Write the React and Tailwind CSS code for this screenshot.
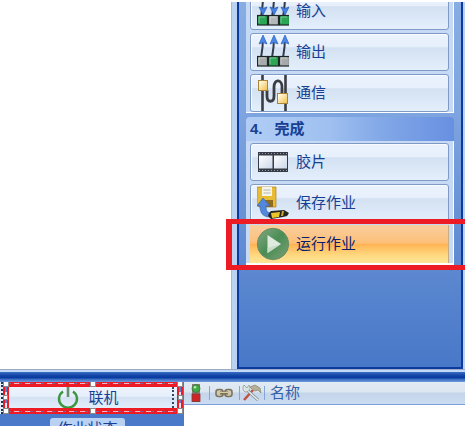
import React from "react";

function SignalIcon({ direction, colors }) {
  const down = direction === "down";
  return (
    <svg viewBox="0 0 32 38" className="h-[38px] w-8 shrink-0" aria-hidden="true">
      {[5, 16, 27].map((x, i) => {
        const tip = x + 1;
        return (
          <g key={x}>
            <path d={`M${tip} 4Q${tip} 14 ${x - 1} 25`} stroke="#2f3a4b" strokeWidth="2" fill="none" />
            {down ? (
              <path d={`M${tip - 4} 15l4 1.500 4-1.500-4 8z`} fill="#4582e2" stroke="#2359b9" strokeWidth=".7" />
            ) : (
              <path d={`M${tip - 4} 11l4-9 4 9-4-1.500z`} fill="#4c86e6" stroke="#2b62c0" strokeWidth=".7" />
            )}
            <rect x={x - 4.5} y="23.500" width="10" height="9.500" fill={colors[i]} stroke="#1d2626" strokeWidth="1.200" />
            <path d={`M${x - 3} 31v-6h6`} stroke="#ffffff" strokeOpacity=".4" fill="none" />
          </g>
        );
      })}
    </svg>
  );
}

function LinkIcon() {
  return (
    <svg viewBox="0 0 32 36" className="h-9 w-8 shrink-0" aria-hidden="true">
      <defs>
        <linearGradient id="plug" x2="1" y2="1">
          <stop offset=".2" stopColor="#fff6dc" />
          <stop offset="1" stopColor="#f2bd3f" />
        </linearGradient>
      </defs>
      <g fill="none" stroke="#3b3d42">
        <path d="M5.500 0v36M28.500 0v36" strokeWidth="2.600" />
        <path d="M10 15v6c0 7 7 7 7 0V12c0-9 9-8 8 2v8" strokeWidth="2.800" />
      </g>
      <rect x="1.500" y="5.500" width="9" height="10" fill="url(#plug)" stroke="#a8843c" />
      <rect x="20.500" y="18.500" width="10" height="10" fill="url(#plug)" stroke="#a8843c" />
    </svg>
  );
}

function FilmIcon() {
  return (
    <svg viewBox="0 0 32 32" className="h-8 w-8 shrink-0" aria-hidden="true">
      <defs>
        <linearGradient id="frame" x2="1" y2="1">
          <stop stopColor="#ffffff" />
          <stop offset="1" stopColor="#cbd7ea" />
        </linearGradient>
      </defs>
      <rect x="1" y="6" width="30" height="20" fill="#363b45" />
      <path d="M2 7.500h28M2 24.500h28" stroke="#969ca8" strokeDasharray="1 2" />
      <rect x="2" y="9.500" width="13.500" height="13" fill="url(#frame)" />
      <rect x="17" y="9.500" width="13" height="13" fill="url(#frame)" />
    </svg>
  );
}

function SaveIcon() {
  return (
    <svg viewBox="0 0 32 34" className="h-[34px] w-8 shrink-0" aria-hidden="true">
      <path d="M0 1h19v20H2l-2-2z" fill="#e8bd35" stroke="#a98420" strokeWidth=".7" />
      <path d="M5 1h10v9H5z" fill="#f5f4e7" />
      <path d="M6.500 4h7M6.500 7h7" stroke="#b3b6ae" />
      <path d="M4 14h12v7H4z" fill="#8e6b1f" />
      <path d="M0 20l6-8 7 8H9c0 5 1 6 4 7v4C6 31 3 27 3 20z" fill="#5288db" stroke="#3465ae" strokeWidth=".7" />
      <path d="M12 27l2-2 13-1 5 3-2 3-4 1-12 2-3-3z" fill="#252622" />
      <path d="M14 27l9-1-1 5-7 1z" fill="#e9c42b" />
      <path d="M25 25l2 0-1 5h-2z" fill="#c9a82b" />
    </svg>
  );
}

function PlayIcon() {
  return (
    <svg viewBox="0 0 34 34" className="-mr-[1px] h-[34px] w-[34px] shrink-0" aria-hidden="true">
      <defs>
        <linearGradient id="play" x2="1" y2="1">
          <stop stopColor="#83a883" />
          <stop offset=".5" stopColor="#4b8d54" />
          <stop offset="1" stopColor="#7ca178" />
        </linearGradient>
      </defs>
      <circle cx="17" cy="17" r="15.700" fill="url(#play)" stroke="#6b8d67" />
      <path d="M11.500 8v18L25 17z" fill="#dfeadf" />
      <path d="M11.500 26v-5L25 17z" fill="#c8dbc8" />
    </svg>
  );
}

function ToolButton({ icon, label, active }) {
  return (
    <button
      type="button"
      className={
        "flex h-[38px] w-full shrink-0 items-center gap-[7px] px-[6px] text-left " +
        (active
          ? "border-r border-[#c6ad87] bg-[linear-gradient(#f8cf9f_0%,#fdbf78_48%,#ffb352_50%,#ffd982_80%,#ffe596_100%)] text-[#0b1c70]"
          : "rounded-[3px] border border-[#7f9bc5] bg-[linear-gradient(#ebf3fd_0%,#e6effb_36%,#d3e1f2_38%,#e4effc_100%)] text-[#173f94] shadow-[inset_1px_1px_0_#f8fbff]")
      }
    >
      {icon}
      <span>{label}</span>
    </button>
  );
}

function Sidebar() {
  return (
    <aside className="mt-[2px] flex w-[234px] border-l border-[#aeb9c9] bg-[#bcd2f1] pl-[5px]">
      <div className="flex w-[226px] shrink-0 flex-col border-x-2 border-b-2 border-[#0b3aa0] bg-[linear-gradient(#87ade3_0%,#7ea5df_30%,#638dd3_65%,#4878c8_100%)] px-[7px]">
        <section className="shrink-0 overflow-hidden border-r border-b border-white bg-[#c6daf6] px-1">
          <div className="-mt-[10px] flex flex-col gap-[3px]">
            <ToolButton icon={<SignalIcon direction="down" colors={["#2aa654", "#b4b7b7", "#2aa654"]} />} label="输入" />
            <ToolButton icon={<SignalIcon direction="up" colors={["#a6aaaa", "#2aa654", "#a6aaaa"]} />} label="输出" />
            <ToolButton icon={<LinkIcon />} label="通信" />
          </div>
        </section>
        <section className="mt-1">
          <h2 className="flex h-6 items-center gap-3 rounded-t-[4px] bg-[linear-gradient(90deg,#b1cdf5_0%,#9fc0f0_40%,#82a8e7_65%,#6890e1_100%)] pl-1 text-[15px] font-bold text-[#173f94]">
            <span>4.</span>
            <span>完成</span>
          </h2>
          <div className="flex flex-col gap-[3px] border-r border-b-2 border-white bg-[#c6daf6] px-1 pt-[2px]">
            <ToolButton icon={<FilmIcon />} label="胶片" />
            <ToolButton icon={<SaveIcon />} label="保存作业" />
            <div className="relative">
              <ToolButton icon={<PlayIcon />} label="运行作业" active />
              <div className="pointer-events-none absolute -top-[6px] -right-6 -bottom-[7px] -left-6 z-10 border-y-[5px] border-l-[6px] border-[#ed1c24]" />
            </div>
          </div>
        </section>
      </div>
    </aside>
  );
}

function SelectionFrame() {
  return (
    <div className="pointer-events-none absolute inset-0 border-[6px] border-[#ed1c24]">
      <div className="absolute -inset-x-[6px] -top-[4px] h-px bg-[repeating-linear-gradient(90deg,#f0b8c8_0px,#f0b8c8_5px,#8a5f98_5px,#8a5f98_8px,#ed1c24_8px,#ed1c24_11px)]" />
      <div className="absolute -inset-x-[6px] -bottom-[4px] h-px bg-[repeating-linear-gradient(90deg,#f0b8c8_0px,#f0b8c8_5px,#8a5f98_5px,#8a5f98_8px,#ed1c24_8px,#ed1c24_11px)]" />
      <div className="absolute -inset-y-[6px] -left-[4px] w-[2px] bg-[repeating-linear-gradient(#dfe6fa_0px,#dfe6fa_5px,#5a7bc9_5px,#5a7bc9_11px)]" />
      <div className="absolute -inset-y-[6px] -right-[4px] w-[2px] bg-[repeating-linear-gradient(#dfe6fa_0px,#dfe6fa_5px,#5a7bc9_5px,#5a7bc9_11px)]" />
      <div className="absolute -inset-[6px] grid grid-cols-3 content-between">
        {Array.from({ length: 9 }, (_, i) => (
          <i
            key={i}
            className={
              (i > 2 && i < 6 ? "h-[5px] w-[5px] " : "h-[6px] w-[6px] ") +
              "border border-[#8a8a8a] " +
              (i === 4 ? "invisible " : "bg-white ") +
              (i % 3 === 0 ? "justify-self-start" : i % 3 === 1 ? "justify-self-center" : "justify-self-end")
            }
          />
        ))}
      </div>
    </div>
  );
}

function StatusPanel() {
  return (
    <div className="flex w-[184px] shrink-0 flex-col overflow-hidden bg-[#4b79ca]">
      <div className="flex h-8">
        <div className="w-[3px] border-r-2 border-dotted border-[#26334d] bg-[#e5effc]" />
        <div className="relative -mt-px h-[33px] flex-1 p-[6px]">
          <button
            type="button"
            className="flex h-full w-full items-center justify-center gap-2 bg-[linear-gradient(#eef4fd_0%,#e5eefa_45%,#d3e1f2_48%,#e3eefb_100%)] pr-[11px] text-[#173f94]"
          >
            <svg viewBox="0 0 24 22" className="h-[22px] w-6" fill="none" aria-hidden="true">
              <path d="M7 4.500a9 8.800 0 1 0 10 0" stroke="#3d9640" strokeWidth="2.400" />
              <path d="M12 0v10" stroke="#64916c" strokeWidth="2.600" />
            </svg>
            <span>联机</span>
          </button>
          <div className="absolute top-[6px] right-[9px] bottom-[6px] border-r-2 border-dotted border-[#334568]" />
          <SelectionFrame />
        </div>
        <div className="w-px" />
      </div>
      <div className="ml-[50px] mt-1 flex h-[22px] w-[75px] shrink-0 items-center justify-center rounded-t-[3px] bg-[#b9d1f3] text-[#173f94]">
        作业状态
      </div>
    </div>
  );
}

function ColumnHeader() {
  return (
    <div className="flex h-[23px] items-center border-b border-[#79a0d9] bg-[linear-gradient(#e2ebf3_0%,#dbe6f1_45%,#c5d6eb_50%,#cbdcf2_100%)] pl-[7px] text-[#3460a7]">
      <svg viewBox="0 0 10 18" className="h-[18px] w-[10px]" aria-hidden="true">
        <rect x="1" width="8" height="18" fill="#8a8178" />
        <circle cx="5" cy="4.500" r="4" fill="#3dac42" stroke="#4f6a48" strokeWidth=".8" />
        <circle cx="4" cy="3.200" r="1.300" fill="#b4eaae" />
        <rect x="1" y="10" width="8" height="7.500" fill="#d02527" stroke="#7d3a34" strokeWidth=".8" />
      </svg>
      <span className="ml-2 h-[14px] w-px bg-[#85a6d7]" />
      <svg viewBox="0 0 18 10" className="ml-[5px] h-[10px] w-[18px]" fill="none" aria-hidden="true">
        <rect x="1" y="1.500" width="7" height="7" rx="2.500" fill="#cfc8b0" stroke="#7d745d" strokeWidth="1.600" />
        <rect x="10" y="1.500" width="7" height="7" rx="2.500" fill="#cfc8b0" stroke="#7d745d" strokeWidth="1.600" />
        <path d="M5 5h8" stroke="#6e654e" strokeWidth="3" />
        <path d="M5 4.500h8" stroke="#d9cba0" strokeWidth="1.300" />
      </svg>
      <span className="ml-[6px] h-[14px] w-px bg-[#85a6d7]" />
      <svg viewBox="0 0 20 18" className="ml-[2px] h-[18px] w-5" fill="none" aria-hidden="true">
        <path d="M11 6L2 16" stroke="#c2543f" strokeWidth="2.600" />
        <path d="M8 3l5-2 5 3 1 5-3-3-3 1-3-2z" fill="#b5b096" stroke="#8a8468" strokeWidth=".7" />
        <path d="M5 6l11 10" stroke="#7d8d92" strokeWidth="3" />
        <path d="M5 6l11 10" stroke="#eef2f3" strokeWidth="1.300" />
        <path d="M2 1l3 3 2-3c2 3 0 7-3 7S0 4 2 1z" fill="#dce3e3" stroke="#83938f" strokeWidth=".7" />
      </svg>
      <span className="ml-[2px] h-[14px] w-px bg-[#85a6d7]" />
      <span className="ml-[5px]">名称</span>
    </div>
  );
}

export default function App() {
  return (
    <div className="flex h-screen flex-col overflow-hidden bg-white font-['Liberation_Sans','Noto_Sans_CJK_SC',sans-serif] text-[15px] leading-5">
      <main className="flex min-h-0 flex-1 justify-end">
        <Sidebar />
      </main>
      <div className="h-[3px] shrink-0 border-t border-[#9babc3] bg-[#c1d9f7]" />
      <div className="h-[10px] shrink-0 bg-[linear-gradient(#3b6fc2_0%,#1749a9_30%,#0738a0_58%,#3668bd_70%,#6e9ae0_100%)]" />
      <footer className="flex h-11 shrink-0">
        <StatusPanel />
        <div className="min-w-0 flex-1">
          <ColumnHeader />
        </div>
      </footer>
    </div>
  );
}
